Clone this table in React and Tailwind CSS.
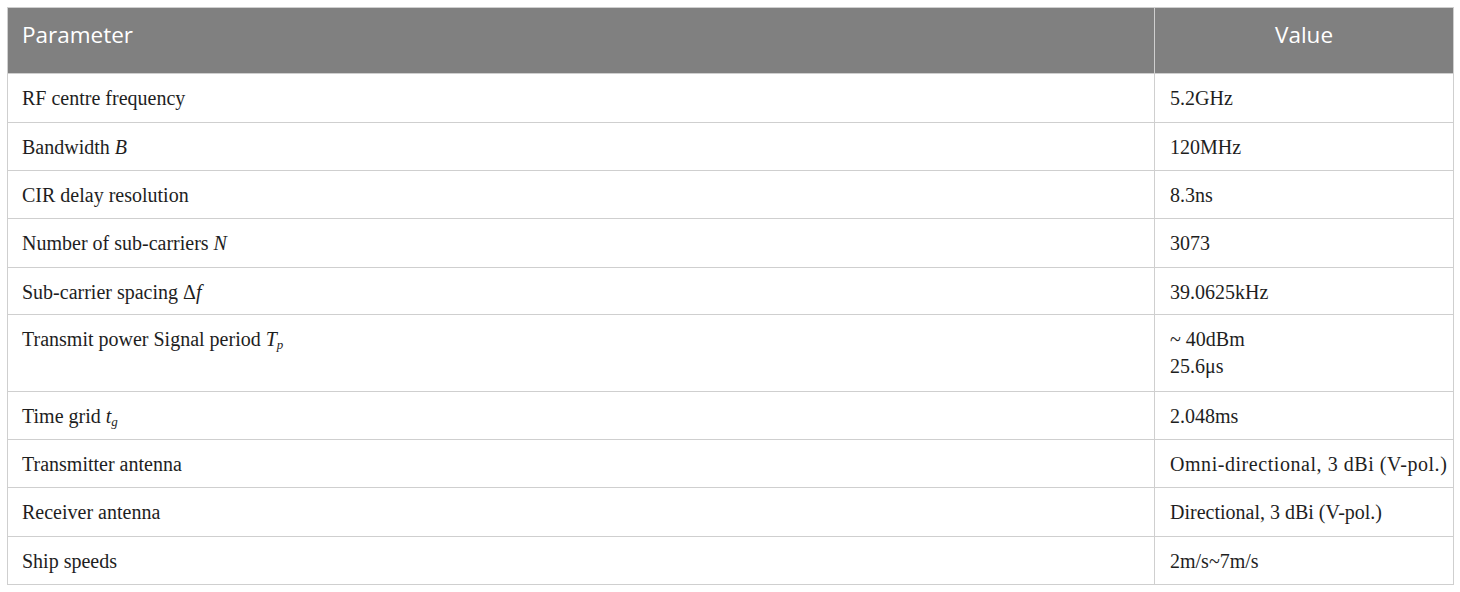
const ROWS = [
  { label: 'RF centre frequency', value: ['5.2GHz'], h: 'h-[49px]' },
  { label: <>Bandwidth <i>B</i></>, value: ['120MHz'], h: 'h-[48px]' },
  { label: 'CIR delay resolution', value: ['8.3ns'], h: 'h-[48px]' },
  { label: <>Number of sub-carriers <i>N</i></>, value: ['3073'], h: 'h-[49px]' },
  { label: <>Sub-carrier spacing Δ<i>f</i></>, value: ['39.0625kHz'], h: 'h-[47px]' },
  {
    label: <>Transmit power Signal period <i>T<sub className="text-[13px]">p</sub></i></>,
    value: ['~ 40dBm', '25.6μs'],
    h: 'h-[77px]',
  },
  { label: <>Time grid <i>t<sub className="text-[13px]">g</sub></i></>, value: ['2.048ms'], h: 'h-[48px]' },
  {
    label: 'Transmitter antenna',
    value: ['Omni-directional, 3 dBi (V-pol.)'],
    h: 'h-[48px]',
    wide: true,
  },
  { label: 'Receiver antenna', value: ['Directional, 3 dBi (V-pol.)'], h: 'h-[49px]' },
  { label: 'Ship speeds', value: ['2m/s~7m/s'], h: 'h-[48px]' },
]

export default function App() {
  return (
    <div className="w-[1460px] h-[592px] bg-white pt-[7px] pl-[7px]">
      <table className="w-[1446px] border-collapse table-fixed">
        <colgroup>
          <col className="w-[1147px]" />
          <col className="w-[299px]" />
        </colgroup>
        <thead>
          <tr className="h-[66px] bg-[#808080] text-white font-['Open_Sans',sans-serif] text-[22.5px]">
            <th className="border-[1.5px] border-[#cfcfcf] px-[14px] pb-[12px] text-left font-normal">Parameter</th>
            <th className="border-[1.5px] border-[#cfcfcf] px-[14px] pb-[12px] text-center font-normal">Value</th>
          </tr>
        </thead>
        <tbody className="font-['Liberation_Serif',serif] text-[20px] text-[#1e1e1e]">
          {ROWS.map((row, i) => (
            <tr key={i} className={row.h}>
              <td className="border-[1.5px] border-[#cfcfcf] px-[14px] pt-[11px] align-top leading-[27px]">
                {row.label}
              </td>
              <td
                className={`border-[1.5px] border-[#cfcfcf] pl-[15px] pr-0 pt-[11px] align-top leading-[27px] whitespace-nowrap ${
                  row.wide ? 'tracking-[0.55px]' : ''
                }`}
              >
                {row.value.map((v, j) => (
                  <div key={j}>{v}</div>
                ))}
              </td>
            </tr>
          ))}
        </tbody>
      </table>
    </div>
  )
}
